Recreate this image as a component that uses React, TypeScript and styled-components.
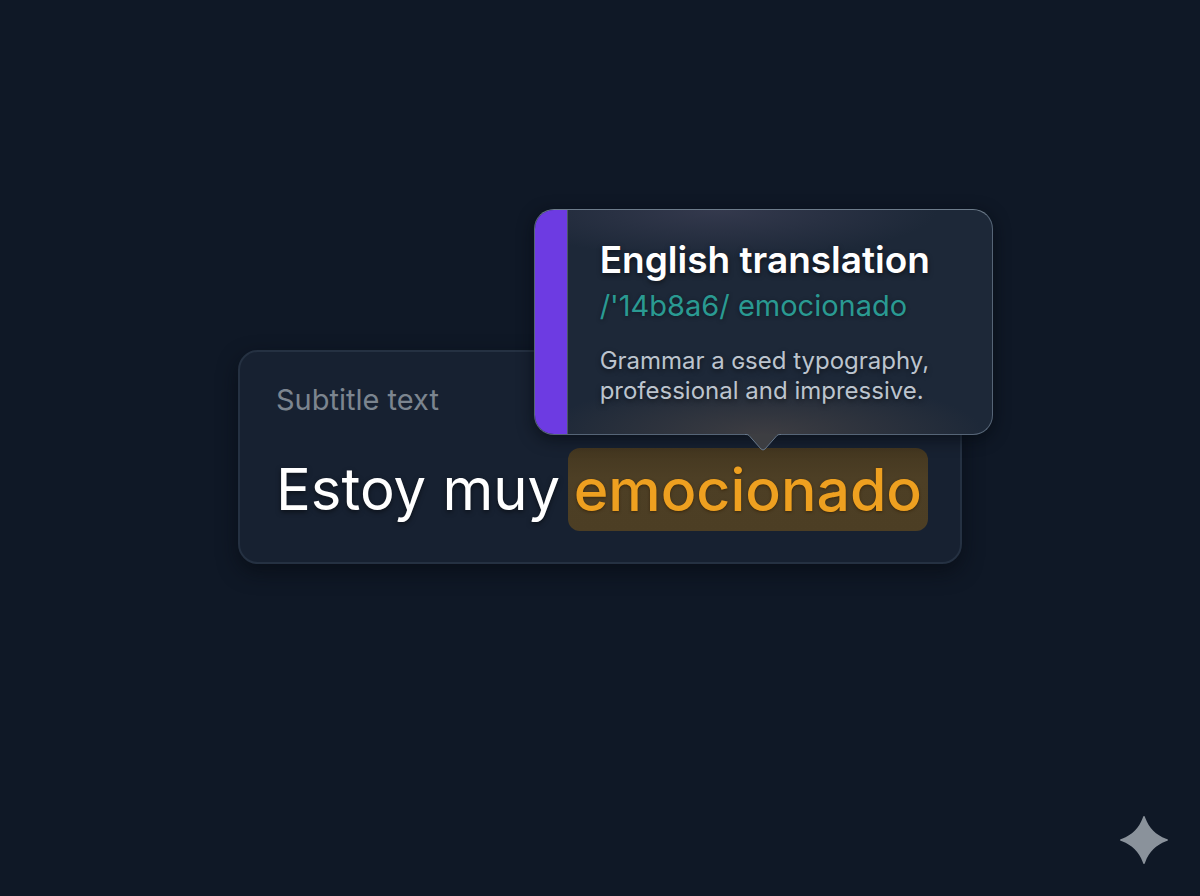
import React from "react";
import styled, { createGlobalStyle } from "styled-components";

const GlobalStyle = createGlobalStyle`
  *, *::before, *::after { box-sizing: border-box; }
  body {
    margin: 0;
    background: #0f1826;
    color: #ffffff;
    font-family: Inter, "Liberation Sans", sans-serif;
  }
`;

const Page = styled.div`
  position: relative;
  display: flex;
  align-items: center;
  justify-content: center;
  min-height: 100vh;
  padding: 17px 0 0;
`;

const SubtitleCard = styled.main`
  width: min(724px, 100%);
  padding: 32px 32px 31px 36px;
  border: 2px solid #253142;
  border-radius: 20px;
  background: #172131;
  box-shadow: 0 8px 20px rgba(6, 10, 16, 0.6);
`;

const Label = styled.p`
  margin: 0 0 32px;
  color: #7c858f;
  font-size: 29px;
  line-height: 32px;
`;

const Line = styled.p`
  display: flex;
  align-items: center;
  justify-content: space-between;
  margin: 0;
  font-size: 58px;
  line-height: 83px;
  white-space: nowrap;
  text-shadow: 0 2px 5px rgba(0, 0, 0, 0.5);
`;

const WordAnchor = styled.span`
  position: relative;
`;

const Word = styled.mark`
  display: block;
  padding: 0 6px;
  border-radius: 12px;
  background: linear-gradient(#443720, #4d3f25 36%, #4c3e24);
  color: #eea020;
  font-size: 59px;
  font-weight: 500;
  text-shadow: 0 1px 3px rgba(50, 30, 0, 0.7);
`;

const Popover = styled.aside`
  position: absolute;
  bottom: calc(100% + 13px);
  left: -34px;
  display: flex;
  width: 459px;
  border: 1px solid #566577;
  border-top-color: #6d7c8b;
  border-radius: 20px;
  background:
    radial-gradient(ellipse 220px 56px at 50% 100%, #3d3d42, rgba(61, 61, 66, 0)),
    radial-gradient(ellipse 220px 48px at 40% 0, #34394d, rgba(52, 57, 77, 0)),
    #1d2838;
  box-shadow: 0 4px 16px rgba(5, 9, 16, 0.65);
`;

const Accent = styled.span`
  flex: none;
  width: 33px;
  border-right: 1px solid #4c5666;
  border-radius: 19px 0 0 19px;
  background: #6d3be2;
`;

const Details = styled.span`
  display: flex;
  flex-direction: column;
  padding: 28px 32px;
`;

const Heading = styled.strong`
  font-size: 37px;
  font-weight: 600;
  line-height: 44px;
`;

const Phonetic = styled.span`
  margin-bottom: 16px;
  color: #2a9a92;
  font-size: 29px;
  line-height: 48px;
  text-shadow: 0 1px 4px rgba(0, 0, 0, 0.4);
`;

const Note = styled.span`
  color: #bcc4ce;
  font-size: 24px;
  line-height: 30px;
`;

const Pointer = styled.svg`
  position: absolute;
  top: 100%;
  left: 50%;
  width: 36px;
  height: 18px;
  margin-left: -18px;
`;

const Sparkle = styled.svg`
  position: absolute;
  right: 32px;
  bottom: 32px;
  width: 48px;
  height: 48px;
`;

export default function App() {
  return (
    <>
      <GlobalStyle />
      <Page>
        <SubtitleCard>
          <Label>Subtitle text</Label>
          <Line lang="es">
            <span>Estoy muy</span>
            <WordAnchor>
              <Word>emocionado</Word>
              <Popover lang="en">
                <Accent />
                <Details>
                  <Heading>English translation</Heading>
                  <Phonetic>/'14b8a6/ emocionado</Phonetic>
                  <Note>
                    Grammar a ɢsed typography,
                    <br />
                    professional and impressive.
                  </Note>
                </Details>
                <Pointer viewBox="0 0 36 18" aria-hidden="true">
                  <path d="M1 0H35Q33 .5 32 1.500L20 15Q18 17 16 15L4 1.500Q3 .5 1 0Z" fill="#3d3e42" />
                  <path d="M0 .5H1Q3 .5 4 1.500L16 15Q18 17 20 15L32 1.500Q33 .5 35 .5H36" fill="none" stroke="#66778b" />
                </Pointer>
              </Popover>
            </WordAnchor>
          </Line>
        </SubtitleCard>
        <Sparkle viewBox="0 0 48 48" aria-hidden="true">
          <path d="M24 0Q25 0 25.300 2C29 12 36 19 46 22.700Q48 23 48 24Q48 25 46 25.300C36 29 29 36 25.300 46Q25 48 24 48Q23 48 22.700 46C19 36 12 29 2 25.300Q0 25 0 24Q0 23 2 22.700C12 19 19 12 22.700 2Q23 0 24 0Z" fill="#8a929b" />
        </Sparkle>
      </Page>
    </>
  );
}
